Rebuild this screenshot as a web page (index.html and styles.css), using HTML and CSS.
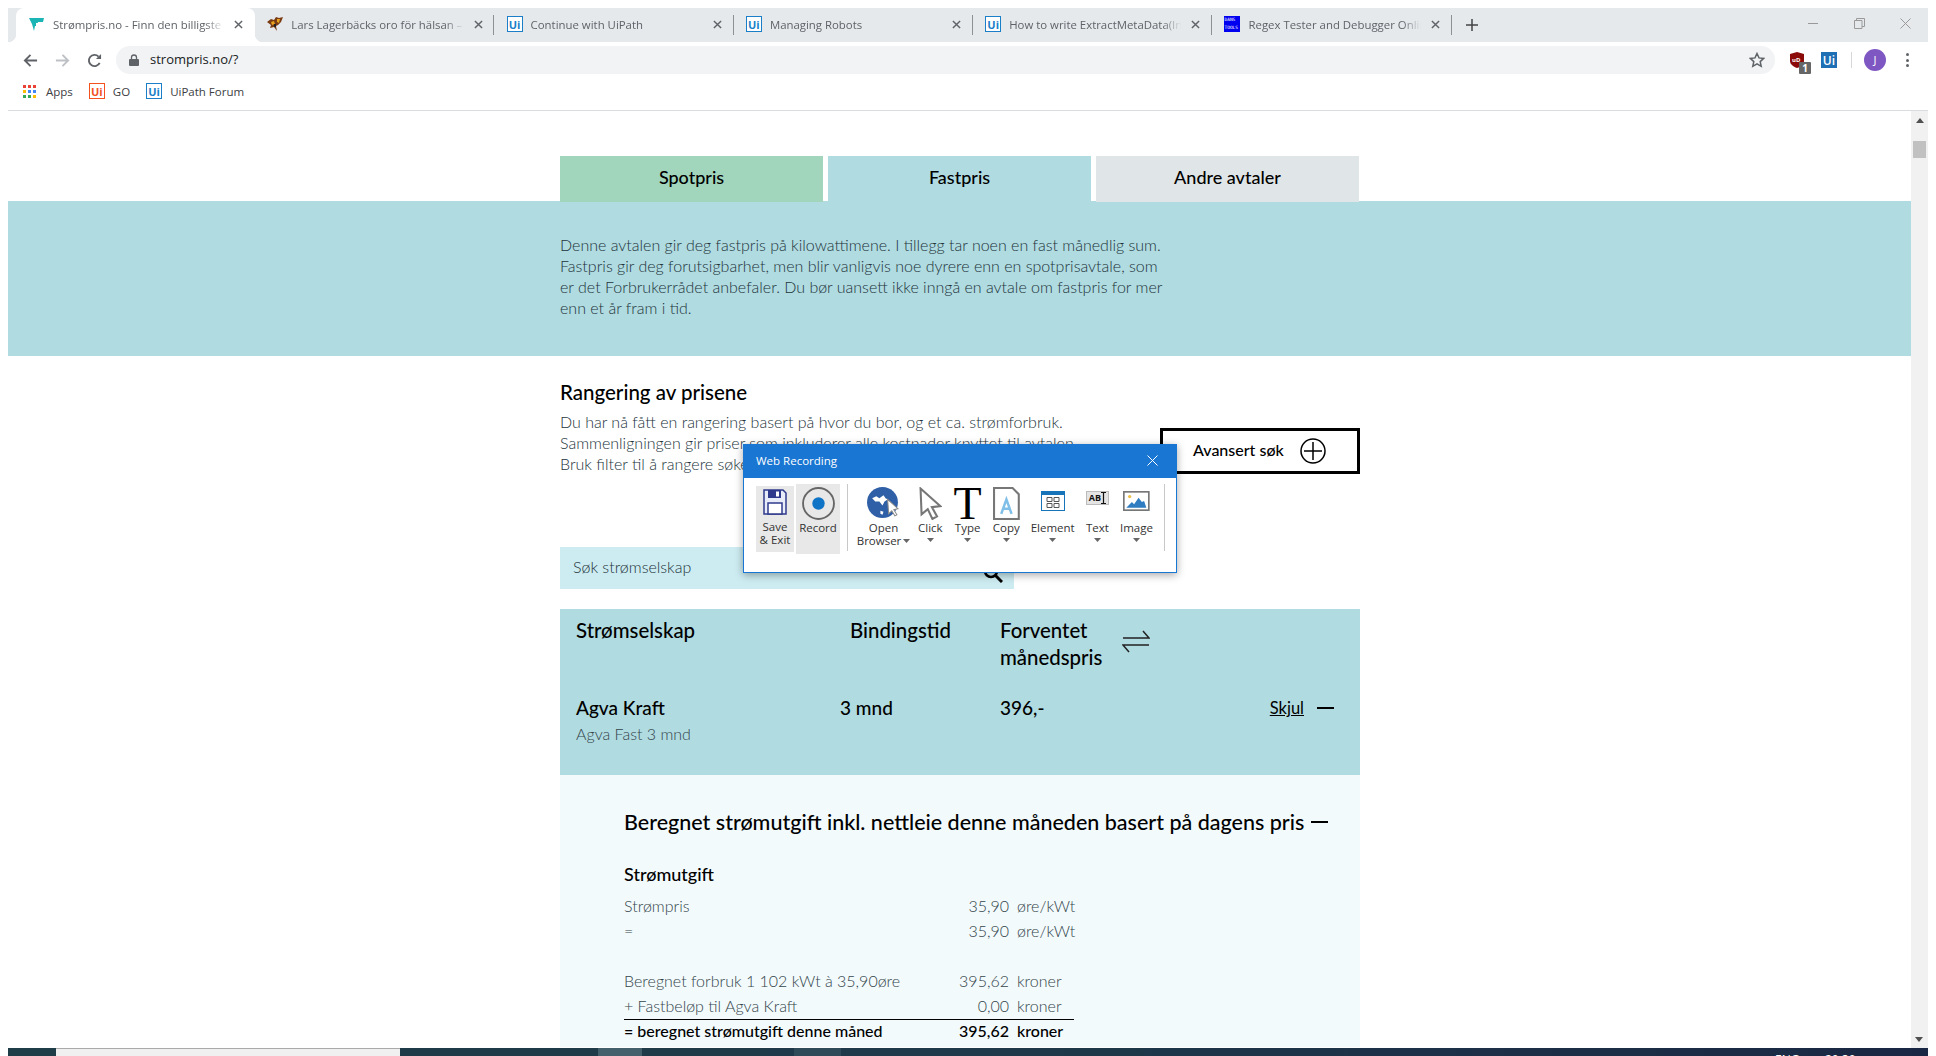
FILE: index.html
```html
<!DOCTYPE html>
<html lang="en">
<head>
  <meta charset="UTF-8">
  <title>Strømpris.no - Finn den billigste strømavtalen</title>
  <meta name="viewport" content="width=device-width, initial-scale=1.0">
  <link rel="stylesheet" href="styles.css">
</head>
<body>

  <svg class="sprites" width="0" height="0">
    <symbol id="x" viewBox="0 0 10 10"><path d="M1 1l8 8M9 1l-8 8" stroke="#5f6368" stroke-width="1.6" fill="none"/></symbol>
    <symbol id="caret" viewBox="0 0 7 4"><path d="M0 0h7L3.500 4z" fill="#666"/></symbol>
  </svg>

  <div class="window">

    <!-- Tab strip -->
    <div class="tabstrip">
      <div class="tab active">
        <svg class="favicon" viewBox="0 0 16 16"><path d="M0 2h15l-1 4H9L8 10H6L5 15 3 8z" fill="#1bb5b5"/><path d="M7 7h5l-1 3H7z" fill="#fff"/></svg>
        <span class="tab-title">Strømpris.no - Finn den billigste strømavtalen</span>
        <svg class="tab-close"><use href="#x"/></svg>
      </div>
      <div class="tab">
        <svg class="favicon" viewBox="0 0 16 16"><path d="M0 6l4-3 3 1 2-3 3 1 4-1-2 5-3 3-2 1 1 5-3-4-4 1 1-3z" fill="#7a3b12"/><path d="M4 6l3-1 1 3-3 1zM10 3l3 0-1 4-2-1z" fill="#e8a21c"/><path d="M7 8l2 0 0 3-2 0z" fill="#222"/></svg>
        <span class="tab-title">Lars Lagerbäcks oro för hälsan – inför matchen</span>
        <svg class="tab-close"><use href="#x"/></svg>
      </div>
      <div class="tab divided">
        <span class="ui-logo">Ui</span>
        <span class="tab-title">Continue with UiPath</span>
        <svg class="tab-close"><use href="#x"/></svg>
      </div>
      <div class="tab divided">
        <span class="ui-logo">Ui</span>
        <span class="tab-title">Managing Robots</span>
        <svg class="tab-close"><use href="#x"/></svg>
      </div>
      <div class="tab divided">
        <span class="ui-logo">Ui</span>
        <span class="tab-title">How to write ExtractMetaData(Invoke)</span>
        <svg class="tab-close"><use href="#x"/></svg>
      </div>
      <div class="tab divided last">
        <span class="dans-logo">DANS<br>TOOLS</span>
        <span class="tab-title">Regex Tester and Debugger Online</span>
        <svg class="tab-close"><use href="#x"/></svg>
      </div>
      <svg class="new-tab" viewBox="0 0 12 12"><path d="M6 0v12M0 6h12" stroke="#444" stroke-width="1.5"/></svg>
      <div class="win-controls">
        <svg viewBox="0 0 11 11"><path d="M0 5.500h10" stroke="#999" stroke-width="1"/></svg>
        <svg viewBox="0 0 11 11"><path d="M.5 2.500h7.500v8H.5zM2.500 2.500v-2h8v8H8" stroke="#999" stroke-width="1" fill="none"/></svg>
        <svg viewBox="0 0 11 11"><path d="M.5.500l10 10M10.500.500l-10 10" stroke="#999" stroke-width="1"/></svg>
      </div>
    </div>

    <!-- Address bar and bookmarks -->
    <div class="toolbar">
      <div class="nav-row">
        <div class="nav-btn">
          <svg viewBox="0 0 16 16"><path d="M15 8H2M8 2L2 8l6 6" stroke="#5f6368" stroke-width="2" fill="none"/></svg>
        </div>
        <div class="nav-btn">
          <svg viewBox="0 0 16 16"><path d="M1 8h13M8 2l6 6-6 6" stroke="#bdc1c6" stroke-width="2" fill="none"/></svg>
        </div>
        <div class="nav-btn">
          <svg viewBox="0 0 16 16"><path d="M13.500 10.500A6 6 0 1 1 12.300 3.800" stroke="#5f6368" stroke-width="2" fill="none"/><path d="M9.500 6.500H15V1z" fill="#5f6368"/></svg>
        </div>
        <div class="address">
          <svg class="lock" viewBox="0 0 10 12"><path d="M2.500 5V3.500a2.500 2.500 0 0 1 5 0V5" stroke="#5f6368" stroke-width="1.300" fill="none"/><rect y="5" width="10" height="7" rx="1" fill="#5f6368"/></svg>
          <span class="url">strompris.no/?</span>
          <svg class="star" viewBox="0 0 16 16"><path d="M8 1.500l2 4.400 4.700.5-3.500 3.200 1 4.700L8 11.900l-4.200 2.400 1-4.700L1.300 6.400 6 5.900z" stroke="#5f6368" stroke-width="1.500" fill="none"/></svg>
        </div>
        <div class="extensions">
          <div class="ublock">
            <svg viewBox="0 0 14 16"><path d="M7 0l7 2v7c0 3-3 5.500-7 7-4-1.500-7-4-7-7V2z" fill="#8b0a0a"/></svg>
            <span class="ublock-mark">uD</span>
            <span class="badge">1</span>
          </div>
          <span class="ui-ext">Ui</span>
          <span class="ext-divider"></span>
          <span class="avatar">J</span>
          <span class="kebab"><i></i><i></i><i></i></span>
        </div>
      </div>
      <div class="bookmarks">
        <div class="bookmark">
          <svg class="apps-icon" viewBox="0 0 13 13">
            <rect width="3" height="3" fill="#ea4335"/><rect x="5" width="3" height="3" fill="#ea4335"/><rect x="10" width="3" height="3" fill="#ea4335"/>
            <rect y="5" width="3" height="3" fill="#fbbc04"/><rect x="5" y="5" width="3" height="3" fill="#4285f4"/><rect x="10" y="5" width="3" height="3" fill="#4285f4"/>
            <rect y="10" width="3" height="3" fill="#34a853"/><rect x="5" y="10" width="3" height="3" fill="#34a853"/><rect x="10" y="10" width="3" height="3" fill="#fbbc04"/>
          </svg>
          <span>Apps</span>
        </div>
        <div class="bookmark"><span class="ui-logo orange">Ui</span><span>GO</span></div>
        <div class="bookmark"><span class="ui-logo">Ui</span><span>UiPath Forum</span></div>
      </div>
    </div>

    <!-- Page -->
    <div class="viewport">
      <div class="page">
        <div class="container">
          <div class="plan-tabs">
            <div class="plan-tab spot">Spotpris</div>
            <div class="plan-tab fixed">Fastpris</div>
            <div class="plan-tab other">Andre avtaler</div>
          </div>
        </div>

        <div class="band">
          <div class="container">
            <p>Denne avtalen gir deg fastpris på kilowattimene. I tillegg tar noen en fast månedlig sum.<br>
            Fastpris gir deg forutsigbarhet, men blir vanligvis noe dyrere enn en spotprisavtale, som<br>
            er det Forbrukerrådet anbefaler. Du bør uansett ikke inngå en avtale om fastpris for mer<br>
            enn et år fram i tid.</p>
          </div>
        </div>

        <div class="container">
          <h2 class="ranking-title">Rangering av prisene</h2>
          <div class="ranking">
            <p>Du har nå fått en rangering basert på hvor du bor, og et ca. strømforbruk.<br>
            Sammenligningen gir priser som inkluderer alle kostnader knyttet til avtalen.<br>
            Bruk filter til å rangere søket etter dine behov.</p>
            <div class="advanced">
              <span>Avansert søk</span>
              <svg viewBox="0 0 26 26"><circle cx="13" cy="13" r="12" stroke="#000" stroke-width="1.500" fill="none"/><path d="M13 4v18M4 13h18" stroke="#000" stroke-width="1.500"/></svg>
            </div>
          </div>

          <div class="search">
            <span>Søk strømselskap</span>
            <svg viewBox="0 0 20 20"><circle cx="8" cy="8" r="6" stroke="#000" stroke-width="2.500" fill="none"/><path d="M12.500 12.500L19 19" stroke="#000" stroke-width="3"/></svg>
          </div>

          <div class="result">
            <div class="result-head">
              <span class="col-name">Strømselskap</span>
              <span class="col-bind">Bindingstid</span>
              <span class="col-price">Forventet<br>månedspris</span>
              <svg class="swap" viewBox="0 0 28 24"><path d="M1 8h26L21 1M27 15H1l6 7" stroke="#222" stroke-width="1.500" fill="none"/></svg>
            </div>
            <div class="result-row">
              <div class="col-name">
                <strong>Agva Kraft</strong>
                <small>Agva Fast 3 mnd</small>
              </div>
              <strong class="col-bind short">3 mnd</strong>
              <strong class="col-price">396,-</strong>
              <div class="toggle"><u>Skjul</u><i></i></div>
            </div>
          </div>

          <div class="details">
            <div class="details-title"><span>Beregnet strømutgift inkl. nettleie denne måneden basert på dagens pris</span><i></i></div>
            <h3>Strømutgift</h3>
            <div class="sums">
              <span>Strømpris</span><span class="num">35,90</span><span class="unit">øre/kWt</span>
              <span>=</span><span class="num">35,90</span><span class="unit">øre/kWt</span>
              <span class="spacer"></span>
              <span>Beregnet forbruk 1 102 kWt à 35,90øre</span><span class="num">395,62</span><span class="unit">kroner</span>
              <span>+ Fastbeløp til Agva Kraft</span><span class="num">0,00</span><span class="unit">kroner</span>
              <span class="total">= beregnet strømutgift denne måned</span><span class="num total">395,62</span><span class="unit total">kroner</span>
            </div>
          </div>
        </div>
      </div>

      <div class="scrollbar">
        <svg viewBox="0 0 8 5"><path d="M0 5h8L4 0z" fill="#505050"/></svg>
        <div class="thumb"></div>
        <svg class="down" viewBox="0 0 8 5"><path d="M0 0h8L4 5z" fill="#505050"/></svg>
      </div>

      <!-- Web Recording popup -->
      <div class="recorder">
        <div class="recorder-title">
          <span>Web Recording</span>
          <svg viewBox="0 0 11 11"><path d="M.5.500l10 10M10.500.500l-10 10" stroke="#fff" stroke-width="1"/></svg>
        </div>
        <div class="ribbon">
          <div class="tool save">
            <svg class="tool-icon" viewBox="0 0 24 26"><path d="M1 1h19l3 3v21H1z" fill="#e8ecf8" stroke="#2f3a8c" stroke-width="1.500"/><rect x="5" y="1" width="13" height="8" fill="#2f3a8c"/><rect x="13" y="2.500" width="3" height="5" fill="#fff"/><rect x="5" y="14" width="14" height="11" fill="#fff" stroke="#2f3a8c" stroke-width="1.500"/></svg>
            <span>Save<br>&amp; Exit</span>
          </div>
          <div class="tool record">
            <svg class="tool-icon" viewBox="0 0 32 32"><circle cx="16" cy="16" r="15" fill="none" stroke="#666" stroke-width="1.800"/><circle cx="16" cy="16" r="6" fill="#0f73c6"/></svg>
            <span>Record</span>
          </div>
          <div class="ribbon-divider"></div>
          <div class="tool browser">
            <svg class="tool-icon" viewBox="0 0 32 32"><circle cx="15" cy="15" r="15" fill="#2f5fa6"/><path d="M5 11l4-2 3 2 4-3 2 3 2 1-3 2-2 4-3-4-4 0zM13 23l3 1-1 3-2-1z" fill="#fff"/><path d="M20 12l10 9-4 1 3 5-2 1-3-5-3 3z" fill="#fff" stroke="#8a8a8a" stroke-width="1"/></svg>
            <span>Open<br>Browser<svg class="caret inline"><use href="#caret"/></svg></span>
          </div>
          <div class="tool">
            <svg class="tool-icon" viewBox="0 0 22 32"><path d="M1.500 1.500l19 17-8 1 5 9-4.500 2.500-4.500-9.500-6 5z" fill="#fff" stroke="#777" stroke-width="2"/></svg>
            <span>Click</span>
            <svg class="caret"><use href="#caret"/></svg>
          </div>
          <div class="tool type">
            <span class="big-t">T</span>
            <span>Type</span>
            <svg class="caret"><use href="#caret"/></svg>
          </div>
          <div class="tool">
            <svg class="tool-icon" viewBox="0 0 26 32"><path d="M1 1h18l6 6v24H1z" fill="#fff" stroke="#777" stroke-width="2"/><path d="M8 26l5-14 5 14M9.800 21h6.400" stroke="#7fbfe8" stroke-width="2.400" fill="none"/></svg>
            <span>Copy</span>
            <svg class="caret"><use href="#caret"/></svg>
          </div>
          <div class="tool">
            <svg class="tool-icon small" viewBox="0 0 24 20"><rect width="24" height="20" fill="#1874b8"/><rect x="1" y="4" width="22" height="15" fill="#fff"/><path d="M6 6.500h5v4H6zM13 6.500h5v4h-5zM6 12.500h5v4H6zM13 12.500h5v4h-5z" fill="none" stroke="#555" stroke-width="1"/></svg>
            <span>Element</span>
            <svg class="caret"><use href="#caret"/></svg>
          </div>
          <div class="tool">
            <div class="text-tool"><span class="text-tool-box">AB</span><svg viewBox="0 0 5 12"><path d="M0 .500h5M0 11.500h5M2.500 .500v11" stroke="#111" stroke-width="1.200"/></svg></div>
            <span>Text</span>
            <svg class="caret"><use href="#caret"/></svg>
          </div>
          <div class="tool">
            <svg class="tool-icon small" viewBox="0 0 24 18"><rect x=".75" y=".75" width="22.500" height="16.500" fill="#fff" stroke="#777" stroke-width="1.500"/><path d="M3 15l5-5 2 2 4-6 3 4 2-1 2 6z" fill="#2f7cc0"/><circle cx="6" cy="5" r="1.500" fill="#f0c24a"/></svg>
            <span>Image</span>
            <svg class="caret"><use href="#caret"/></svg>
          </div>
          <div class="ribbon-divider end"></div>
        </div>
      </div>
    </div>

    <!-- Windows taskbar, mostly cut off -->
    <div class="taskbar">
      <div class="taskbar-search"></div>
      <div class="taskbar-item one"></div>
      <div class="taskbar-item two"></div>
      <span class="tray">ENG</span>
      <span class="tray clock">20:30</span>
    </div>
  </div>

</body>
</html>
```

FILE: styles.css
```css
* {
  box-sizing: border-box;
}

body {
  margin: 0;
  height: 100vh;
  padding: 8px 8px 0;
  background: #fff;
  overflow: hidden;
  font-family: "Open Sans", sans-serif;
}

.sprites {
  position: absolute;
}

.window {
  display: flex;
  flex-direction: column;
  height: 100%;
}

/* Tab strip */
.tabstrip {
  display: flex;
  align-items: center;
  height: 34px;
  padding-left: 8px;
  background: #e6e9ec;
  flex: none;
}

.tab {
  position: relative;
  display: flex;
  align-items: center;
  flex: 0 0 239.3px;
  min-width: 0;
  height: 34px;
  padding: 0 13px 2px 12px;
  font-size: 11.400px;
  color: #5f6368;
}

.tab.active {
  background: #fff;
  border-radius: 8px 8px 0 0;
  padding-left: 13px;
}

.tab.active::before,
.tab.active::after {
  content: "";
  position: absolute;
  bottom: 0;
  width: 8px;
  height: 8px;
}

.tab.active::before {
  left: -8px;
  background: radial-gradient(circle at 0 0, #e6e9ec 8px, #fff 8.500px);
}

.tab.active::after {
  right: -8px;
  background: radial-gradient(circle at 100% 0, #e6e9ec 8px, #fff 8.500px);
}

.tab.divided::after {
  content: "";
  position: absolute;
  right: 0;
  top: 7px;
  height: 20px;
  width: 1px;
  background: #8e9194;
}

.tab:nth-child(2)::after {
  content: "";
  position: absolute;
  right: 1px;
  top: 7px;
  height: 20px;
  width: 1px;
  background: #8e9194;
}

.favicon {
  width: 16px;
  height: 16px;
  flex: none;
}

.tab-title {
  flex: 1;
  min-width: 0;
  margin-left: 8px;
  white-space: nowrap;
  overflow: hidden;
  -webkit-mask-image: linear-gradient(to right, #000 88%, transparent 99%);
  mask-image: linear-gradient(to right, #000 88%, transparent 99%);
}

.tab-close {
  width: 9px;
  height: 9px;
  margin-left: 8px;
  margin-right: -1px;
  flex: none;
}

.ui-logo {
  display: flex;
  align-items: center;
  justify-content: center;
  width: 16px;
  height: 16px;
  flex: none;
  border: 1.500px solid #1a7fc8;
  color: #1a7fc8;
  background: #fff;
  font-size: 11px;
  font-weight: 700;
  line-height: 1;
}

.ui-logo.orange {
  border-color: #f4511e;
  color: #f4511e;
}

.dans-logo {
  display: block;
  width: 16px;
  height: 16px;
  flex: none;
  background: #0000f0;
  color: #fff;
  font-family: "DejaVu Sans Mono", monospace;
  font-size: 4.500px;
  line-height: 8px;
  overflow: hidden;
  white-space: nowrap;
}

.new-tab {
  width: 12px;
  height: 12px;
  margin-left: 14px;
  flex: none;
}

.win-controls {
  display: flex;
  align-items: center;
  gap: 35px;
  margin-left: auto;
  margin-right: 17px;
  margin-top: -4px;
}

.win-controls svg {
  width: 11px;
  height: 11px;
}

/* Toolbar */
.toolbar {
  flex: none;
  height: 69px;
  padding-top: 4px;
  background: #fff;
  border-bottom: 1px solid #dadce0;
}

.nav-row {
  display: flex;
  align-items: center;
  height: 28px;
  padding-left: 6px;
}

.nav-btn {
  display: flex;
  align-items: center;
  justify-content: center;
  width: 32px;
  height: 28px;
  flex: none;
}

.nav-btn svg {
  width: 15px;
  height: 15px;
}

.address {
  display: flex;
  align-items: center;
  flex: 1;
  height: 28px;
  margin-left: 6px;
  padding: 0 10px 0 13px;
  background: #f1f3f4;
  border-radius: 14px;
}

.lock {
  width: 10px;
  height: 12px;
}

.url {
  margin-left: 11px;
  padding-bottom: 2px;
  font-size: 13px;
  color: #202124;
}

.star {
  width: 16px;
  height: 16px;
  margin-left: auto;
}

.extensions {
  display: flex;
  align-items: center;
  width: 153px;
  flex: none;
  padding-left: 15px;
}

.ublock {
  position: relative;
  display: flex;
  width: 14px;
  height: 16px;
}

.ublock svg {
  width: 14px;
  height: 16px;
}

.ublock-mark {
  position: absolute;
  left: 2px;
  top: 4px;
  font-size: 6px;
  font-weight: 700;
  color: #fff;
}

.badge {
  position: absolute;
  left: 9px;
  top: 10px;
  width: 12px;
  height: 12px;
  background: #666;
  border-radius: 1px;
  color: #fff;
  font-size: 10px;
  font-weight: 700;
  line-height: 12px;
  text-align: center;
}

.ui-ext {
  display: flex;
  align-items: center;
  justify-content: center;
  width: 16px;
  height: 16px;
  margin-left: 17px;
  background: #1f6fb5;
  color: #fff;
  font-size: 12px;
  font-weight: 600;
}

.ext-divider {
  width: 1px;
  height: 16px;
  margin-left: 14px;
  background: #d5d7da;
}

.avatar {
  width: 22px;
  height: 22px;
  margin-left: 12px;
  border-radius: 50%;
  background: #7e57c2;
  color: #fff;
  font-size: 11px;
  line-height: 22px;
  text-align: center;
}

.kebab {
  display: flex;
  flex-direction: column;
  gap: 2.500px;
  margin-left: 20px;
}

.kebab i {
  width: 3px;
  height: 3px;
  border-radius: 50%;
  background: #5f6368;
}

.bookmarks {
  display: flex;
  align-items: center;
  height: 28px;
  margin-top: 3px;
  padding-left: 15px;
  gap: 16px;
}

.bookmark {
  display: flex;
  align-items: center;
  gap: 8px;
  font-size: 11.500px;
  color: #3c4043;
}

.apps-icon {
  width: 13px;
  height: 13px;
  margin-right: 2px;
}

/* Page */
.viewport {
  position: relative;
  flex: 1;
  min-height: 0;
  display: flex;
}

.page {
  flex: 1;
  min-width: 0;
  overflow: hidden;
  background: #fff;
  font-family: Lato, sans-serif;
  color: #000;
}

.container {
  width: 799px;
  margin: 0 auto;
}

.plan-tabs {
  display: flex;
  gap: 5px;
  padding-top: 45px;
}

.plan-tab {
  flex: 1;
  height: 46px;
  font-size: 18px;
  font-weight: 500;
  line-height: 42px;
  text-align: center;
  position: relative;
}

.spot { background: #a1d6bd; }
.fixed { background: #b0dbe1; }
.other { background: #e0e5e7; }

.band {
  margin-top: -1px;
  height: 155px;
  padding-top: 33px;
  background: #b0dbe1;
}

.band p,
.ranking p {
  margin: 0;
  font-size: 16px;
  font-weight: 300;
  line-height: 21px;
  color: #22333a;
  white-space: nowrap;
}

.ranking-title {
  margin: 24px 0 0;
  font-size: 20.500px;
  font-weight: 500;
  line-height: 24px;
}

.ranking {
  display: flex;
  justify-content: space-between;
  margin-top: 7px;
  height: 63px;
}

.advanced {
  display: flex;
  align-items: center;
  width: 200px;
  height: 46px;
  margin-top: 17px;
  margin-right: -1px;
  padding-left: 30px;
  border: 3px solid #000;
  background: #fff;
  font-size: 16px;
  font-weight: 500;
}

.advanced span {
  padding-bottom: 3px;
}

.advanced svg {
  width: 26px;
  height: 26px;
  margin-left: 16px;
}

.search {
  display: flex;
  align-items: center;
  justify-content: space-between;
  width: 454px;
  height: 42px;
  margin-top: 73px;
  padding: 0 11px 0 13px;
  background: #cdecf1;
  font-size: 16px;
  font-weight: 300;
  color: #22333a;
}

.search span {
  padding-bottom: 4px;
}

.search svg {
  width: 20px;
  height: 20px;
  margin-top: 10px;
}

.result {
  height: 166px;
  margin-top: 20px;
  margin-right: -1px;
  padding: 8px 16px 0;
  background: #b0dbe1;
}

.result-head {
  display: flex;
  height: 79px;
  font-size: 20.400px;
  font-weight: 500;
  line-height: 27px;
}

.col-name {
  width: 274px;
  flex: none;
}

.col-bind {
  width: 150px;
  flex: none;
}

.col-price {
  flex: none;
}

.swap {
  width: 28px;
  height: 24px;
  margin: 13px 0 0 20px;
}

.result-row {
  display: flex;
  font-size: 19px;
  line-height: 24px;
}

.result-row strong {
  font-weight: 500;
}

.result-row small {
  display: block;
  margin-top: 2px;
  font-size: 16px;
  font-weight: 300;
  line-height: 24px;
  color: #33444a;
}

.short {
  margin-left: -10px;
  width: 160px;
}

.toggle {
  display: flex;
  align-items: center;
  align-self: flex-start;
  gap: 13px;
  height: 24px;
  margin-left: auto;
  margin-right: 10px;
  font-size: 16.500px;
}

.toggle i,
.details-title i {
  display: block;
  width: 17px;
  height: 2px;
  background: #000;
}

.details {
  height: 272px;
  margin-right: -1px;
  padding: 35px 0 0 64px;
  background: #f2fafc;
}

.details-title {
  display: flex;
  align-items: center;
  gap: 7px;
  height: 24px;
  font-size: 21.500px;
  font-weight: 500;
}

.details h3 {
  margin: 28px 0 0;
  height: 24px;
  font-size: 18px;
  font-weight: 500;
  line-height: 24px;
}

.sums {
  display: grid;
  grid-template-columns: 1fr 60px 65px;
  width: 450px;
  margin-top: 7px;
  font-size: 16px;
  font-weight: 300;
  line-height: 25px;
  color: #33444a;
}

.num {
  text-align: right;
}

.unit {
  padding-left: 8px;
}

.spacer {
  grid-column: 1 / -1;
  height: 25px;
}

.total {
  font-weight: 500;
  color: #000;
  border-top: 1px solid #000;
  margin-top: 1px;
  line-height: 22px;
  white-space: nowrap;
}

/* Scrollbar */
.scrollbar {
  position: relative;
  width: 17px;
  flex: none;
  padding-top: 7px;
  background: #f1f1f1;
  text-align: center;
}

.scrollbar svg {
  display: block;
  width: 8px;
  height: 5px;
  margin: 0 auto;
}

.thumb {
  width: 13px;
  height: 17px;
  margin: 18px auto 0;
  background: #c1c1c1;
}

.scrollbar .down {
  position: absolute;
  left: 4px;
  bottom: 6px;
}

/* Web Recording popup */
.recorder {
  position: absolute;
  left: 735px;
  top: 333px;
  width: 434px;
  height: 129px;
  background: #fff;
  border: 1px solid #1976d2;
  box-shadow: 0 2px 8px rgba(0, 0, 0, .35);
  font-family: "Open Sans", sans-serif;
  color: #333;
}

.recorder-title {
  display: flex;
  align-items: center;
  justify-content: space-between;
  height: 33px;
  padding: 0 18px 2px 12px;
  background: #1976d2;
  color: #fff;
  font-size: 11.500px;
}

.recorder-title svg {
  width: 11px;
  height: 11px;
}

.ribbon {
  display: flex;
  align-items: flex-start;
  gap: 11px;
  padding: 6px 0 0 12px;
  font-size: 11.500px;
  line-height: 13px;
  text-align: center;
}

.tool {
  display: flex;
  flex-direction: column;
  align-items: center;
  height: 70px;
  padding-top: 3px;
}

.tool-icon {
  display: block;
  flex: none;
  height: 33px;
  width: auto;
  margin-bottom: 1px;
}

.tool-icon.small {
  height: 20px;
  margin: 4px 0 10px;
}

.save {
  width: 38px;
  height: 66px;
  margin-top: 2px;
  margin-right: -9px;
  background: #e8e8e8;
}

.save .tool-icon {
  height: 26px;
  margin-bottom: 5px;
}

.record {
  width: 44px;
  background: #e8e8e8;
}

.ribbon-divider {
  width: 1px;
  height: 67px;
  margin: 0 -1px 0 -4px;
  background: #c8c8c8;
}

.ribbon-divider.end {
  margin-left: 0;
}

.browser {
  width: 51px;
  margin-right: -2px;
  white-space: nowrap;
}

.caret {
  display: block;
  flex: none;
  width: 7px;
  height: 4px;
  margin-top: 4px;
}

.caret.inline {
  display: inline-block;
  margin: 0 0 2px 2px;
}

.big-t {
  display: block;
  height: 34px;
  font-family: "Liberation Serif", serif;
  font-size: 46px;
  line-height: 33px;
  color: #000;
}

.text-tool {
  display: flex;
  align-items: center;
  height: 14px;
  margin: 4px 0 16px;
  padding: 0 2px;
  background: #e4e4e4;
  border: 1px solid #bbb;
}

.text-tool-box {
  font-size: 9px;
  font-weight: 700;
  color: #111;
  line-height: 12px;
}

.text-tool svg {
  width: 5px;
  height: 12px;
}

/* Taskbar */
.taskbar {
  position: relative;
  flex: none;
  height: 8px;
  overflow: hidden;
  background: linear-gradient(to right, #1f3c49, #1f3a4a 50%, #1a2744);
}

.taskbar-search {
  position: absolute;
  left: 48px;
  top: 0;
  width: 344px;
  height: 8px;
  background: #f0f0f0;
  border-top: 1px solid #aaa;
}

.taskbar-item {
  position: absolute;
  top: 0;
  height: 8px;
  background: #44606d;
}

.taskbar-item.one {
  left: 590px;
  width: 44px;
}

.taskbar-item.two {
  left: 786px;
  width: 47px;
  background: #2f4a58;
}

.tray {
  position: absolute;
  left: 1767px;
  top: 5px;
  color: #fff;
  font-size: 12px;
  line-height: 14px;
}

.tray.clock {
  left: 1817px;
}
```
